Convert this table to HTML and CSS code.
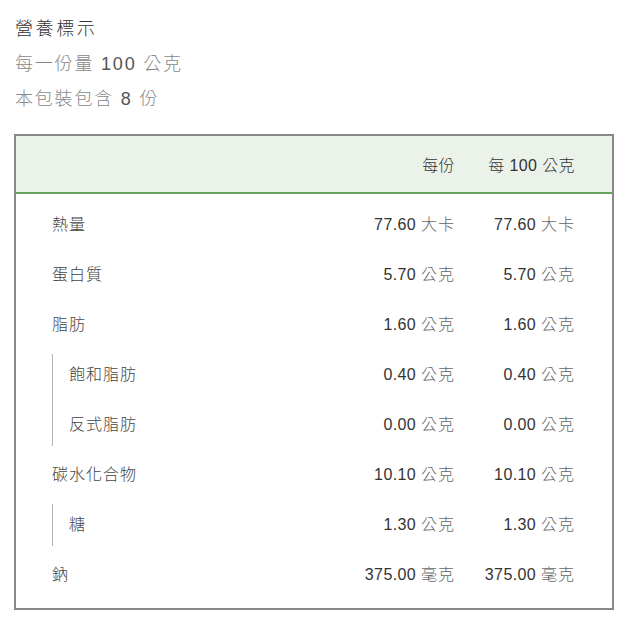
FILE: index.html
```html
<!DOCTYPE html>
<html lang="zh-Hant">
<head>
<meta charset="utf-8">
<title>營養標示</title>
<link rel="stylesheet" href="styles.css">
</head>
<body>
<div class="page">
  <div class="title">營養標示</div>
  <div class="sub">每一份量 <span class="num">100</span> 公克</div>
  <div class="sub">本包裝包含 <span class="num">8</span> 份</div>

  <div class="table">
    <div class="head row">
      <div class="label"></div>
      <div class="val">每份</div>
      <div class="val">每 100 公克</div>
    </div>
    <div class="body">
      <div class="row">
        <div class="label">熱量</div>
        <div class="val">77.60 <span class="unit">大卡</span></div>
        <div class="val">77.60 <span class="unit">大卡</span></div>
      </div>
      <div class="row">
        <div class="label">蛋白質</div>
        <div class="val">5.70 <span class="unit">公克</span></div>
        <div class="val">5.70 <span class="unit">公克</span></div>
      </div>
      <div class="row">
        <div class="label">脂肪</div>
        <div class="val">1.60 <span class="unit">公克</span></div>
        <div class="val">1.60 <span class="unit">公克</span></div>
      </div>
      <div class="group">
        <div class="row">
          <div class="label sublabel">飽和脂肪</div>
          <div class="val">0.40 <span class="unit">公克</span></div>
          <div class="val">0.40 <span class="unit">公克</span></div>
        </div>
        <div class="row">
          <div class="label sublabel">反式脂肪</div>
          <div class="val">0.00 <span class="unit">公克</span></div>
          <div class="val">0.00 <span class="unit">公克</span></div>
        </div>
      </div>
      <div class="row">
        <div class="label">碳水化合物</div>
        <div class="val">10.10 <span class="unit">公克</span></div>
        <div class="val">10.10 <span class="unit">公克</span></div>
      </div>
      <div class="group">
        <div class="row">
          <div class="label sublabel">糖</div>
          <div class="val">1.30 <span class="unit">公克</span></div>
          <div class="val">1.30 <span class="unit">公克</span></div>
        </div>
      </div>
      <div class="row">
        <div class="label">鈉</div>
        <div class="val">375.00 <span class="unit">毫克</span></div>
        <div class="val">375.00 <span class="unit">毫克</span></div>
      </div>
    </div>
  </div>
</div>
</body>
</html>
```

FILE: styles.css
```css
* { box-sizing: border-box; }

html, body {
  margin: 0;
  padding: 0;
  background: #fff;
}

body {
  font-family: "Liberation Sans", "Noto Sans CJK TC", sans-serif;
  font-weight: 300;
  color: #333;
}

.page {
  padding: 11px 13px 0 14px;
}

.title {
  font-size: 18px;
  line-height: 36px;
  letter-spacing: 2.6px;
  color: #333;
  padding-left: 1px;
}

.sub {
  font-size: 18px;
  line-height: 35px;
  letter-spacing: 1.8px;
  color: #888;
  padding-left: 1px;
}

.sub .num {
  color: #555;
}

.table {
  margin-top: 17px;
  width: 600px;
  border: 2px solid #888;
}

.row {
  display: grid;
  grid-template-columns: 1fr 120px 120px;
  align-items: center;
  height: 50px;
  padding: 0 37px 0 36px;
  font-size: 16px;
}

.head {
  height: 56px;
  background: #ebf2ea;
  border-bottom: 2px solid #64a45a;
  box-sizing: content-box;
  color: #444;
}

.body {
  padding: 4px 0 10px;
}

.label {
  color: #444;
  letter-spacing: 1px;
}

.val {
  text-align: right;
  color: #333;
  letter-spacing: 0.4px;
}

.unit {
  color: #666;
  letter-spacing: 1px;
}

.group {
  position: relative;
}

.group::before {
  content: "";
  position: absolute;
  left: 36px;
  top: 6px;
  bottom: 2px;
  width: 1px;
  background: #b5b5b5;
}

.sublabel {
  padding-left: 17px;
}
```
